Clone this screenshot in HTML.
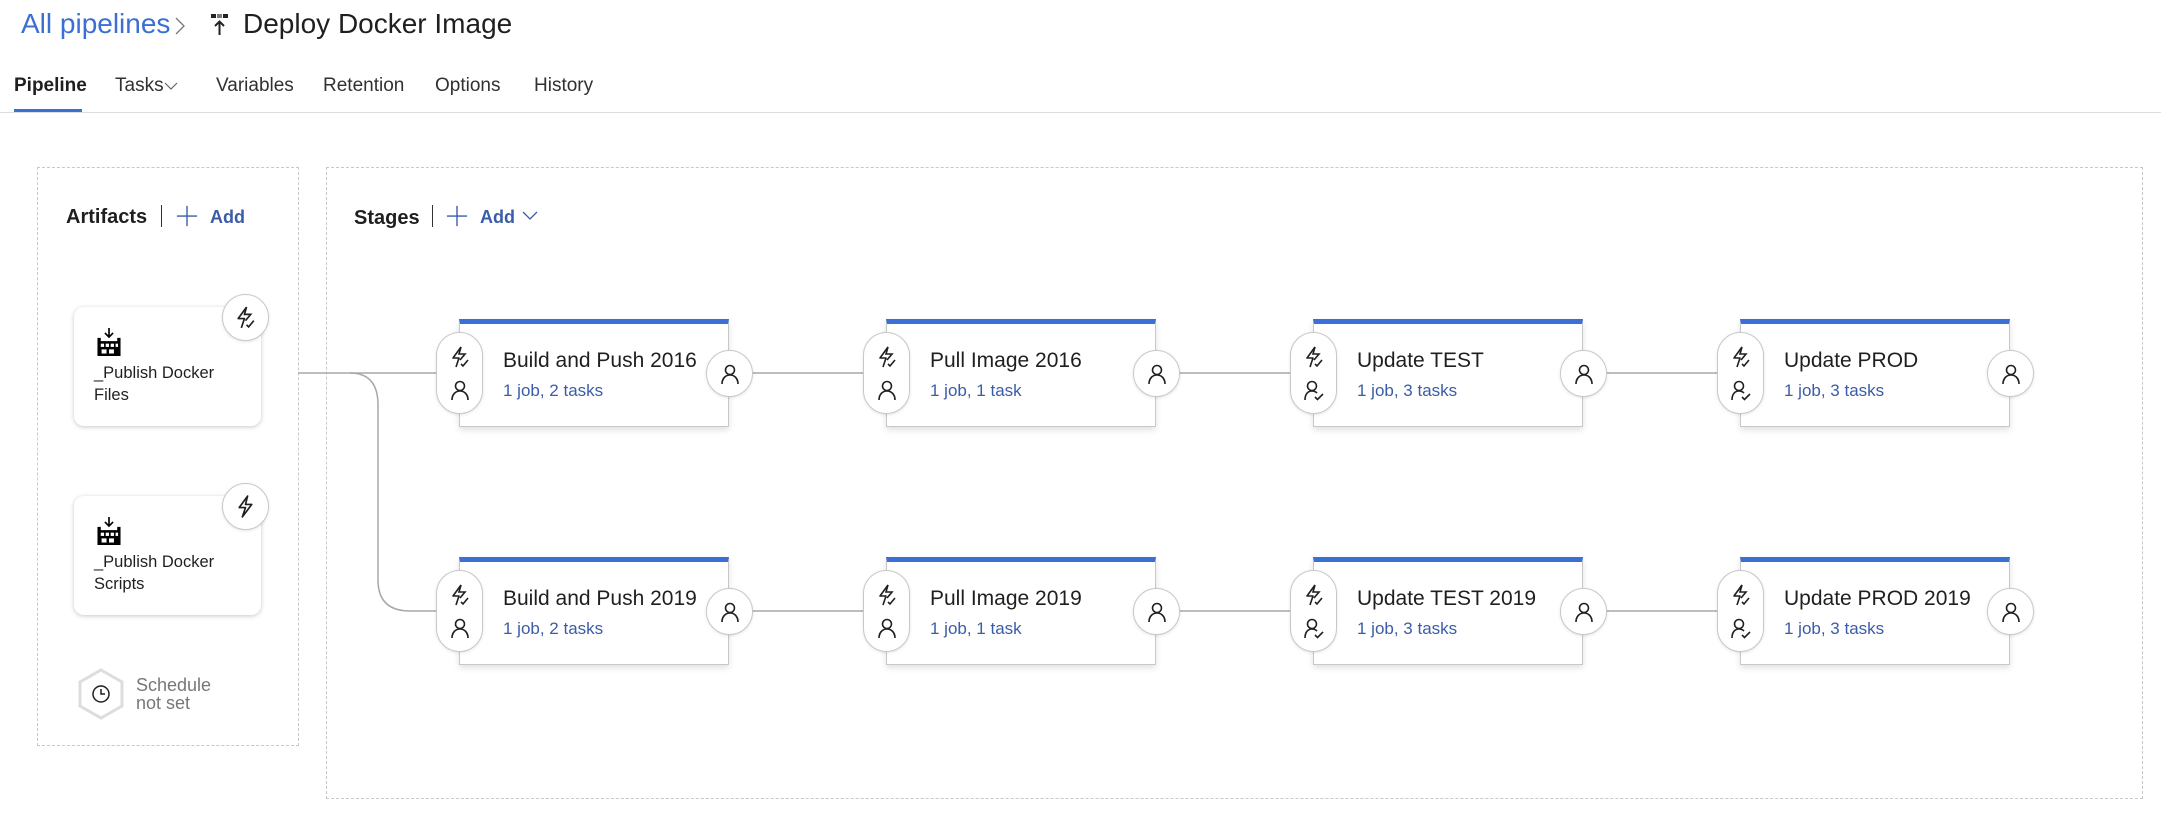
<!DOCTYPE html>
<html><head><meta charset="utf-8"><style>
*{box-sizing:border-box;margin:0;padding:0}
body{width:2161px;height:823px;background:#fff;font-family:"Liberation Sans",sans-serif;position:relative;overflow:hidden;color:#201f1e}
.a{position:absolute}
.tab{position:absolute;top:75px;font-size:19px;color:#323130}
.card{position:absolute;width:270px;height:108px;background:#fff;border:1px solid #c8c8c8;border-top:5px solid #3b6fd4;box-shadow:0 3px 6px rgba(0,0,0,.12)}
.pill{position:absolute;width:47px;height:82px;border-radius:24px;background:#fff;border:1px solid #c8c8c8;box-shadow:0 1px 3px rgba(0,0,0,.1)}
.circ{position:absolute;width:47px;height:47px;border-radius:50%;background:#fff;border:1px solid #c8c8c8;box-shadow:0 1px 3px rgba(0,0,0,.1)}
.t{position:absolute;font-size:21px;color:#201f1e;white-space:nowrap}
.s{position:absolute;font-size:17px;color:#3b5ca8;white-space:nowrap}
.art{position:absolute;width:187px;height:119px;background:#fff;border-radius:10px;box-shadow:0 1px 5px rgba(0,0,0,.22)}
.at{position:absolute;left:20px;font-size:16.5px;line-height:22px;color:#201f1e}
</style></head><body>
<svg width="0" height="0" style="position:absolute">
<symbol id="bolt" viewBox="0 0 24 24"><path d="M13 2 L5 13 H11 L8 22" fill="none" stroke="#201f1e" stroke-width="1.6" stroke-linejoin="round"/><path d="M13 2 L11 9 H17 L12 15" fill="none" stroke="#201f1e" stroke-width="1.6"/><path d="M13 19 L15 21 L20 15" fill="none" stroke="#201f1e" stroke-width="1.6"/></symbol>
<symbol id="bolt2" viewBox="0 0 24 24"><path d="M14 2 L6 13 H12 L9 22 L18 10 H12 Z" fill="none" stroke="#201f1e" stroke-width="1.6" stroke-linejoin="round"/></symbol>
<symbol id="person" viewBox="0 0 24 24"><circle cx="12" cy="8" r="4.5" fill="none" stroke="#201f1e" stroke-width="1.6"/><path d="M4 22 C4 16 8 13 12 13 C16 13 20 16 20 22" fill="none" stroke="#201f1e" stroke-width="1.6"/></symbol>
<symbol id="personc" viewBox="0 0 24 24"><circle cx="10" cy="8" r="4.5" fill="none" stroke="#201f1e" stroke-width="1.6"/><path d="M3 22 C3 16 6 13 10 13 C12 13 14 14 15 15" fill="none" stroke="#201f1e" stroke-width="1.6"/><path d="M13 19 L15.5 21.5 L21 16" fill="none" stroke="#201f1e" stroke-width="1.6"/></symbol>
<symbol id="art" viewBox="0 0 30 34"><path d="M15 0 V10 M10 6 L15 11 L20 6" fill="none" stroke="#000" stroke-width="2"/><path d="M1 12 H5 V16 H25 V12 H29 V34 H1 Z" fill="#000"/><rect x="5" y="19" width="4" height="4" fill="#fff"/><rect x="11" y="19" width="4" height="4" fill="#fff"/><rect x="17" y="19" width="4" height="4" fill="#fff"/><rect x="23" y="19" width="3" height="4" fill="#fff"/><rect x="6" y="26" width="6" height="5" fill="#fff"/><rect x="15" y="26" width="6" height="5" fill="#fff"/></symbol>
<symbol id="plus" viewBox="0 0 24 24"><path d="M12 1 V23 M1 12 H23" stroke="#3b5ca8" stroke-width="1.5"/></symbol>
</svg>

<div class="a" style="left:21px;top:8px;font-size:28px;color:#3b6fd4;">All pipelines</div>
<svg class="a" style="left:174px;top:16px" width="12" height="20"><path d="M2 2 L10 10 L2 18" fill="none" stroke="#777" stroke-width="1.3"/></svg>
<svg class="a" style="left:210px;top:14px" width="24" height="24" viewBox="0 0 24 24"><rect x="1" y="0" width="5" height="4" fill="#222"/><rect x="7" y="0" width="5" height="4" fill="#222" opacity=".6"/><rect x="13" y="0" width="5" height="4" fill="#222"/><path d="M9.5 21 V8 M5 12 L9.5 7.5 L14 12" fill="none" stroke="#222" stroke-width="2"/></svg>
<div class="a" style="left:243px;top:8px;font-size:28px;color:#201f1e;">Deploy Docker Image</div>

<div class="tab" style="left:14px;font-weight:bold;color:#201f1e">Pipeline</div>
<div class="tab" style="left:115px">Tasks</div>
<svg class="a" style="left:164px;top:82px" width="14" height="9"><path d="M1 1 L7 7 L13 1" fill="none" stroke="#666" stroke-width="1.2"/></svg>
<div class="tab" style="left:216px">Variables</div>
<div class="tab" style="left:323px">Retention</div>
<div class="tab" style="left:435px">Options</div>
<div class="tab" style="left:534px">History</div>
<div class="a" style="left:14px;top:109px;width:68px;height:3px;background:#3b6fd4"></div>
<div class="a" style="left:0;top:112px;width:2161px;height:1px;background:#ddd"></div>

<div class="a" style="left:37px;top:167px;width:262px;height:579px;border:1px dashed #c8c8c8"></div>
<div class="a" style="left:326px;top:167px;width:1817px;height:632px;border:1px dashed #c8c8c8"></div>

<div class="a" style="left:66px;top:206px;font-size:20px;font-weight:bold">Artifacts</div>
<div class="a" style="left:161px;top:205px;width:1px;height:22px;background:#333"></div>
<svg class="a" style="left:176px;top:205px" width="22" height="22"><use href="#plus"/></svg>
<div class="a" style="left:210px;top:207px;font-size:18px;font-weight:bold;color:#3b5ca8">Add</div>
<div class="a" style="left:354px;top:207px;font-size:20px;font-weight:bold">Stages</div>
<div class="a" style="left:432px;top:205px;width:1px;height:22px;background:#333"></div>
<svg class="a" style="left:446px;top:205px" width="22" height="22"><use href="#plus"/></svg>
<div class="a" style="left:480px;top:207px;font-size:18px;font-weight:bold;color:#3b5ca8">Add</div>
<svg class="a" style="left:522px;top:211px" width="16" height="10"><path d="M1 1 L8 8 L15 1" fill="none" stroke="#3b5ca8" stroke-width="1.3"/></svg>

<svg class="a" style="left:0;top:0" width="2161" height="823">
<g fill="none" stroke="#a8a8a8" stroke-width="1.5">
<path d="M298 373 H436"/>
<path d="M350 373 Q378 373 378 405 V580 Q378 611 410 611 H436"/>
<path d="M752 373 H863 M1179 373 H1290 M1606 373 H1717"/>
<path d="M752 611 H863 M1179 611 H1290 M1606 611 H1717"/>
</g></svg>

<div class="art" style="left:74px;top:307px"><svg class="a" style="left:22px;top:21px" width="26" height="28"><use href="#art"/></svg><div class="at" style="top:55px">_Publish Docker<br>Files</div></div>
<div class="circ" style="left:222px;top:294px"><svg class="a" style="left:10px;top:10px" width="25" height="25"><use href="#bolt"/></svg></div>
<div class="art" style="left:74px;top:496px"><svg class="a" style="left:22px;top:21px" width="26" height="28"><use href="#art"/></svg><div class="at" style="top:55px">_Publish Docker<br>Scripts</div></div>
<div class="circ" style="left:222px;top:483px"><svg class="a" style="left:10px;top:10px" width="25" height="25"><use href="#bolt2"/></svg></div>

<svg class="a" style="left:76px;top:668px" width="50" height="52"><path d="M25 2 L46 14 V38 L25 50 L4 38 V14 Z" fill="#fff" stroke="#ddd" stroke-width="3"/><circle cx="25" cy="26" r="8" fill="none" stroke="#201f1e" stroke-width="1.5"/><path d="M25 21 V26 H29" fill="none" stroke="#201f1e" stroke-width="1.5"/></svg>
<div class="a" style="left:136px;top:676px;font-size:18px;line-height:18px;color:#777">Schedule<br>not set</div>

<!-- row 1 -->
<div class="card" style="left:459px;top:319px"></div><div class="pill" style="left:436px;top:332px"><svg class="a" style="left:11px;top:12px" width="24" height="24"><use href="#bolt"/></svg><svg class="a" style="left:11px;top:45px" width="24" height="24"><use href="#person"/></svg></div><div class="circ" style="left:706px;top:350px"><svg class="a" style="left:11px;top:11px" width="24" height="24"><use href="#person"/></svg></div><div class="t" style="left:503px;top:349px">Build and Push 2016</div><div class="s" style="left:503px;top:381px">1 job, 2 tasks</div>
<div class="card" style="left:886px;top:319px"></div><div class="pill" style="left:863px;top:332px"><svg class="a" style="left:11px;top:12px" width="24" height="24"><use href="#bolt"/></svg><svg class="a" style="left:11px;top:45px" width="24" height="24"><use href="#person"/></svg></div><div class="circ" style="left:1133px;top:350px"><svg class="a" style="left:11px;top:11px" width="24" height="24"><use href="#person"/></svg></div><div class="t" style="left:930px;top:349px">Pull Image 2016</div><div class="s" style="left:930px;top:381px">1 job, 1 task</div>
<div class="card" style="left:1313px;top:319px"></div><div class="pill" style="left:1290px;top:332px"><svg class="a" style="left:11px;top:12px" width="24" height="24"><use href="#bolt"/></svg><svg class="a" style="left:11px;top:45px" width="24" height="24"><use href="#personc"/></svg></div><div class="circ" style="left:1560px;top:350px"><svg class="a" style="left:11px;top:11px" width="24" height="24"><use href="#person"/></svg></div><div class="t" style="left:1357px;top:349px">Update TEST</div><div class="s" style="left:1357px;top:381px">1 job, 3 tasks</div>
<div class="card" style="left:1740px;top:319px"></div><div class="pill" style="left:1717px;top:332px"><svg class="a" style="left:11px;top:12px" width="24" height="24"><use href="#bolt"/></svg><svg class="a" style="left:11px;top:45px" width="24" height="24"><use href="#personc"/></svg></div><div class="circ" style="left:1987px;top:350px"><svg class="a" style="left:11px;top:11px" width="24" height="24"><use href="#person"/></svg></div><div class="t" style="left:1784px;top:349px">Update PROD</div><div class="s" style="left:1784px;top:381px">1 job, 3 tasks</div>

<!-- row 2 -->
<div class="card" style="left:459px;top:557px"></div><div class="pill" style="left:436px;top:570px"><svg class="a" style="left:11px;top:12px" width="24" height="24"><use href="#bolt"/></svg><svg class="a" style="left:11px;top:45px" width="24" height="24"><use href="#person"/></svg></div><div class="circ" style="left:706px;top:588px"><svg class="a" style="left:11px;top:11px" width="24" height="24"><use href="#person"/></svg></div><div class="t" style="left:503px;top:587px">Build and Push 2019</div><div class="s" style="left:503px;top:619px">1 job, 2 tasks</div>
<div class="card" style="left:886px;top:557px"></div><div class="pill" style="left:863px;top:570px"><svg class="a" style="left:11px;top:12px" width="24" height="24"><use href="#bolt"/></svg><svg class="a" style="left:11px;top:45px" width="24" height="24"><use href="#person"/></svg></div><div class="circ" style="left:1133px;top:588px"><svg class="a" style="left:11px;top:11px" width="24" height="24"><use href="#person"/></svg></div><div class="t" style="left:930px;top:587px">Pull Image 2019</div><div class="s" style="left:930px;top:619px">1 job, 1 task</div>
<div class="card" style="left:1313px;top:557px"></div><div class="pill" style="left:1290px;top:570px"><svg class="a" style="left:11px;top:12px" width="24" height="24"><use href="#bolt"/></svg><svg class="a" style="left:11px;top:45px" width="24" height="24"><use href="#personc"/></svg></div><div class="circ" style="left:1560px;top:588px"><svg class="a" style="left:11px;top:11px" width="24" height="24"><use href="#person"/></svg></div><div class="t" style="left:1357px;top:587px">Update TEST 2019</div><div class="s" style="left:1357px;top:619px">1 job, 3 tasks</div>
<div class="card" style="left:1740px;top:557px"></div><div class="pill" style="left:1717px;top:570px"><svg class="a" style="left:11px;top:12px" width="24" height="24"><use href="#bolt"/></svg><svg class="a" style="left:11px;top:45px" width="24" height="24"><use href="#personc"/></svg></div><div class="circ" style="left:1987px;top:588px"><svg class="a" style="left:11px;top:11px" width="24" height="24"><use href="#person"/></svg></div><div class="t" style="left:1784px;top:587px">Update PROD 2019</div><div class="s" style="left:1784px;top:619px">1 job, 3 tasks</div>
</body></html>
